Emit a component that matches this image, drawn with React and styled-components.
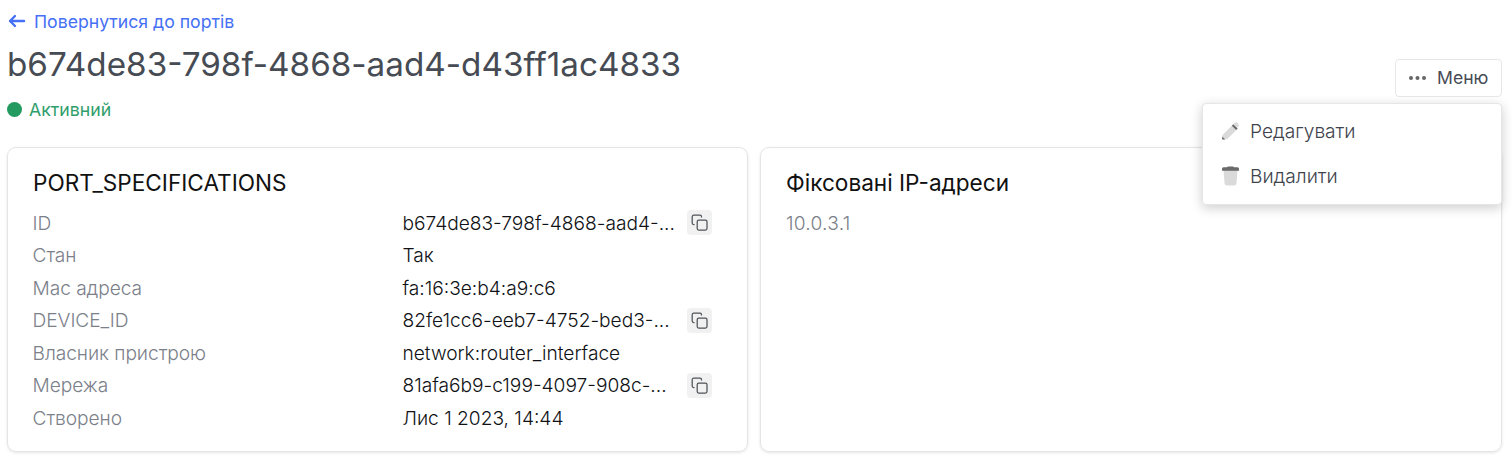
import React from "react";
import styled, { createGlobalStyle } from "styled-components";

const Global = createGlobalStyle`
  *{box-sizing:border-box}
  html,body{margin:0;background:#fff}
  body{font-family:Inter,"Liberation Sans",sans-serif;color:#16181d;height:461px;overflow:hidden}
  h1,h2,p,dl,dt,dd{margin:0;font-weight:400}
`;

const Page = styled.main`
  display:flex;flex-direction:column;height:461px;padding:9px 10px 9px 7px;
`;
const BackLink = styled.a`
  display:flex;align-items:center;height:24px;gap:7px;
  color:#4670f5;font-size:17.65px;white-space:nowrap;
`;
const Header = styled.header`
  display:flex;justify-content:space-between;height:114px;
`;
const Title = styled.h1`
  font-size:33.25px;line-height:44px;margin-top:9px;color:#464b54;white-space:nowrap;
`;
const Status = styled.p`
  display:flex;align-items:center;gap:7px;height:24px;margin-top:11px;
  font-size:17.7px;color:#2f9e6b;
  &::before{content:"";width:15px;height:15px;border-radius:50%;background:#229a60}
`;
const MenuAnchor = styled.div`
  position:relative;margin-top:26px;width:107px;height:38px;
`;
const MenuButton = styled.button`
  display:flex;align-items:center;gap:10px;width:107px;height:38px;padding:0 0 2px 12px;
  background:#fff;border:1px solid #e6e7e9;border-radius:4px;
  font:400 17.6px Inter,sans-serif;color:#464b54;
`;
const Dropdown = styled.div`
  position:absolute;top:44px;right:0;width:300px;height:102px;padding:4px 0;
  background:#fff;border:1px solid #e6e6e8;border-radius:4px;box-shadow:0 3px 12px rgba(0,0,0,.2);
`;
const MenuItem = styled.div`
  display:flex;align-items:center;gap:10px;height:45px;padding-left:18px;
  font-size:19.15px;font-weight:350;color:#3e434c;
`;
const Cards = styled.div`
  display:grid;grid-template-columns:741px 742px;gap:12px;height:305px;
`;
const Card = styled.section`
  height:305px;border:1px solid #e4e5e7;border-radius:9px;padding:20px 25px 0;
  box-shadow:0 1px 3px rgba(0,0,0,.1);
`;
const CardTitle = styled.h2`
  font-size:22.6px;line-height:30px;color:#111;margin-bottom:9px;white-space:nowrap;
`;
const Specs = styled.dl`display:flex;flex-direction:column;margin:-.3px 0 0 -.5px;`;
const Row = styled.div`
  display:grid;grid-template-columns:370px 273px auto;align-items:center;height:32.5px;
  font-size:19.15px;white-space:nowrap;
`;
const Label = styled.dt`&&{font-weight:350};color:#7b808a;letter-spacing:-.05px;`;
const Value = styled.dd`&&{font-weight:300};color:#101216;`;
const CopyButton = styled.button`
  display:flex;align-items:center;justify-content:center;width:25px;height:25px;margin-left:11.5px;
  padding:0;border:0;border-radius:4px;background:#f2f1f1;color:#4d5358;
`;
const Address = styled.p`&&{font-weight:350};font-size:19.15px;letter-spacing:.25px;line-height:33.5px;color:#7b808a;`;

const CopyIcon = () => (
  <svg width="17" height="17" viewBox="0 0 17 17" fill="none" stroke="currentColor" strokeWidth="1.25">
    <rect x="6.2" y="6.2" width="9.8" height="9.8" rx="1.5" />
    <path d="M3.5 10.500H2.700A1.500 1.500 0 0 1 1.200 9V2.700A1.500 1.500 0 0 1 2.700 1.200H9a1.500 1.500 0 0 1 1.500 1.500v.8" />
  </svg>
);

const specs = [
  ["ID", "b674de83-798f-4868-aad4-...", true],
  ["Стан", "Так"],
  ["Mac адреса", "fa:16:3e:b4:a9:c6"],
  ["DEVICE_ID", "82fe1cc6-eeb7-4752-bed3-...", true],
  ["Власник пристрою", "network:router_interface"],
  ["Мережа", "81afa6b9-c199-4097-908c-...", true],
  ["Створено", "Лис 1 2023, 14:44"],
];

export default function App() {
  return (
    <Page>
      <Global />
      <BackLink>
        <svg width="20" height="18" viewBox="0 0 20 18" fill="none" stroke="currentColor" strokeWidth="2.4" strokeLinecap="round" strokeLinejoin="round">
          <path d="M17 9H3M8 4L3 9l5 5" />
        </svg>
        <span>Повернутися до портів</span>
      </BackLink>
      <Header>
        <div>
          <Title>b674de83-798f-4868-aad4-d43ff1ac4833</Title>
          <Status>Активний</Status>
        </div>
        <MenuAnchor>
          <MenuButton>
            <svg width="19" height="6" fill="#666"><circle cx="3" cy="4" r="2" /><circle cx="9.500" cy="4" r="2" /><circle cx="16" cy="4" r="2" /></svg>
            <span>Меню</span>
          </MenuButton>
          <Dropdown>
            <MenuItem>
              <svg width="19" height="20" viewBox="0 0 19 20">
                <path fill="#dadada" d="M1.500 14L11 4.500l4.500 4.500L6 18.200l-4.500.3z" />
                <path fill="#dadada" d="M12.600 2.900l1-1q1.600-1.300 3.400.3t.3 3.400l-1 1z" />
                <path fill="#6a6a6a" d="M10.800 4.700l1.500-1.500 4.400 4.400-1.500 1.500zM1.200 15.500v3h3z" />
              </svg>
              <span>Редагувати</span>
            </MenuItem>
            <MenuItem>
              <svg width="19" height="20" viewBox="0 0 19 20">
                <path fill="#dadada" d="M2.500 4h14l-1 13q-.2 2.500-2.500 2.500H6q-2.300 0-2.500-2.500z" />
                <path fill="#6a6a6a" d="M2.500 1.200H6L7 .5h5l1 .7h3.500Q18 1.200 18 2.700v2H1v-2q0-1.500 1.500-1.500z" />
              </svg>
              <span>Видалити</span>
            </MenuItem>
          </Dropdown>
        </MenuAnchor>
      </Header>
      <Cards>
        <Card>
          <CardTitle>PORT_SPECIFICATIONS</CardTitle>
          <Specs>
            {specs.map(([label, value, copy]) => (
              <Row key={label}>
                <Label>{label}</Label>
                <Value>{value}</Value>
                {copy && <CopyButton aria-label="Copy"><CopyIcon /></CopyButton>}
              </Row>
            ))}
          </Specs>
        </Card>
        <Card>
          <CardTitle>Фіксовані IP-адреси</CardTitle>
          <Address>10.0.3.1</Address>
        </Card>
      </Cards>
    </Page>
  );
}
